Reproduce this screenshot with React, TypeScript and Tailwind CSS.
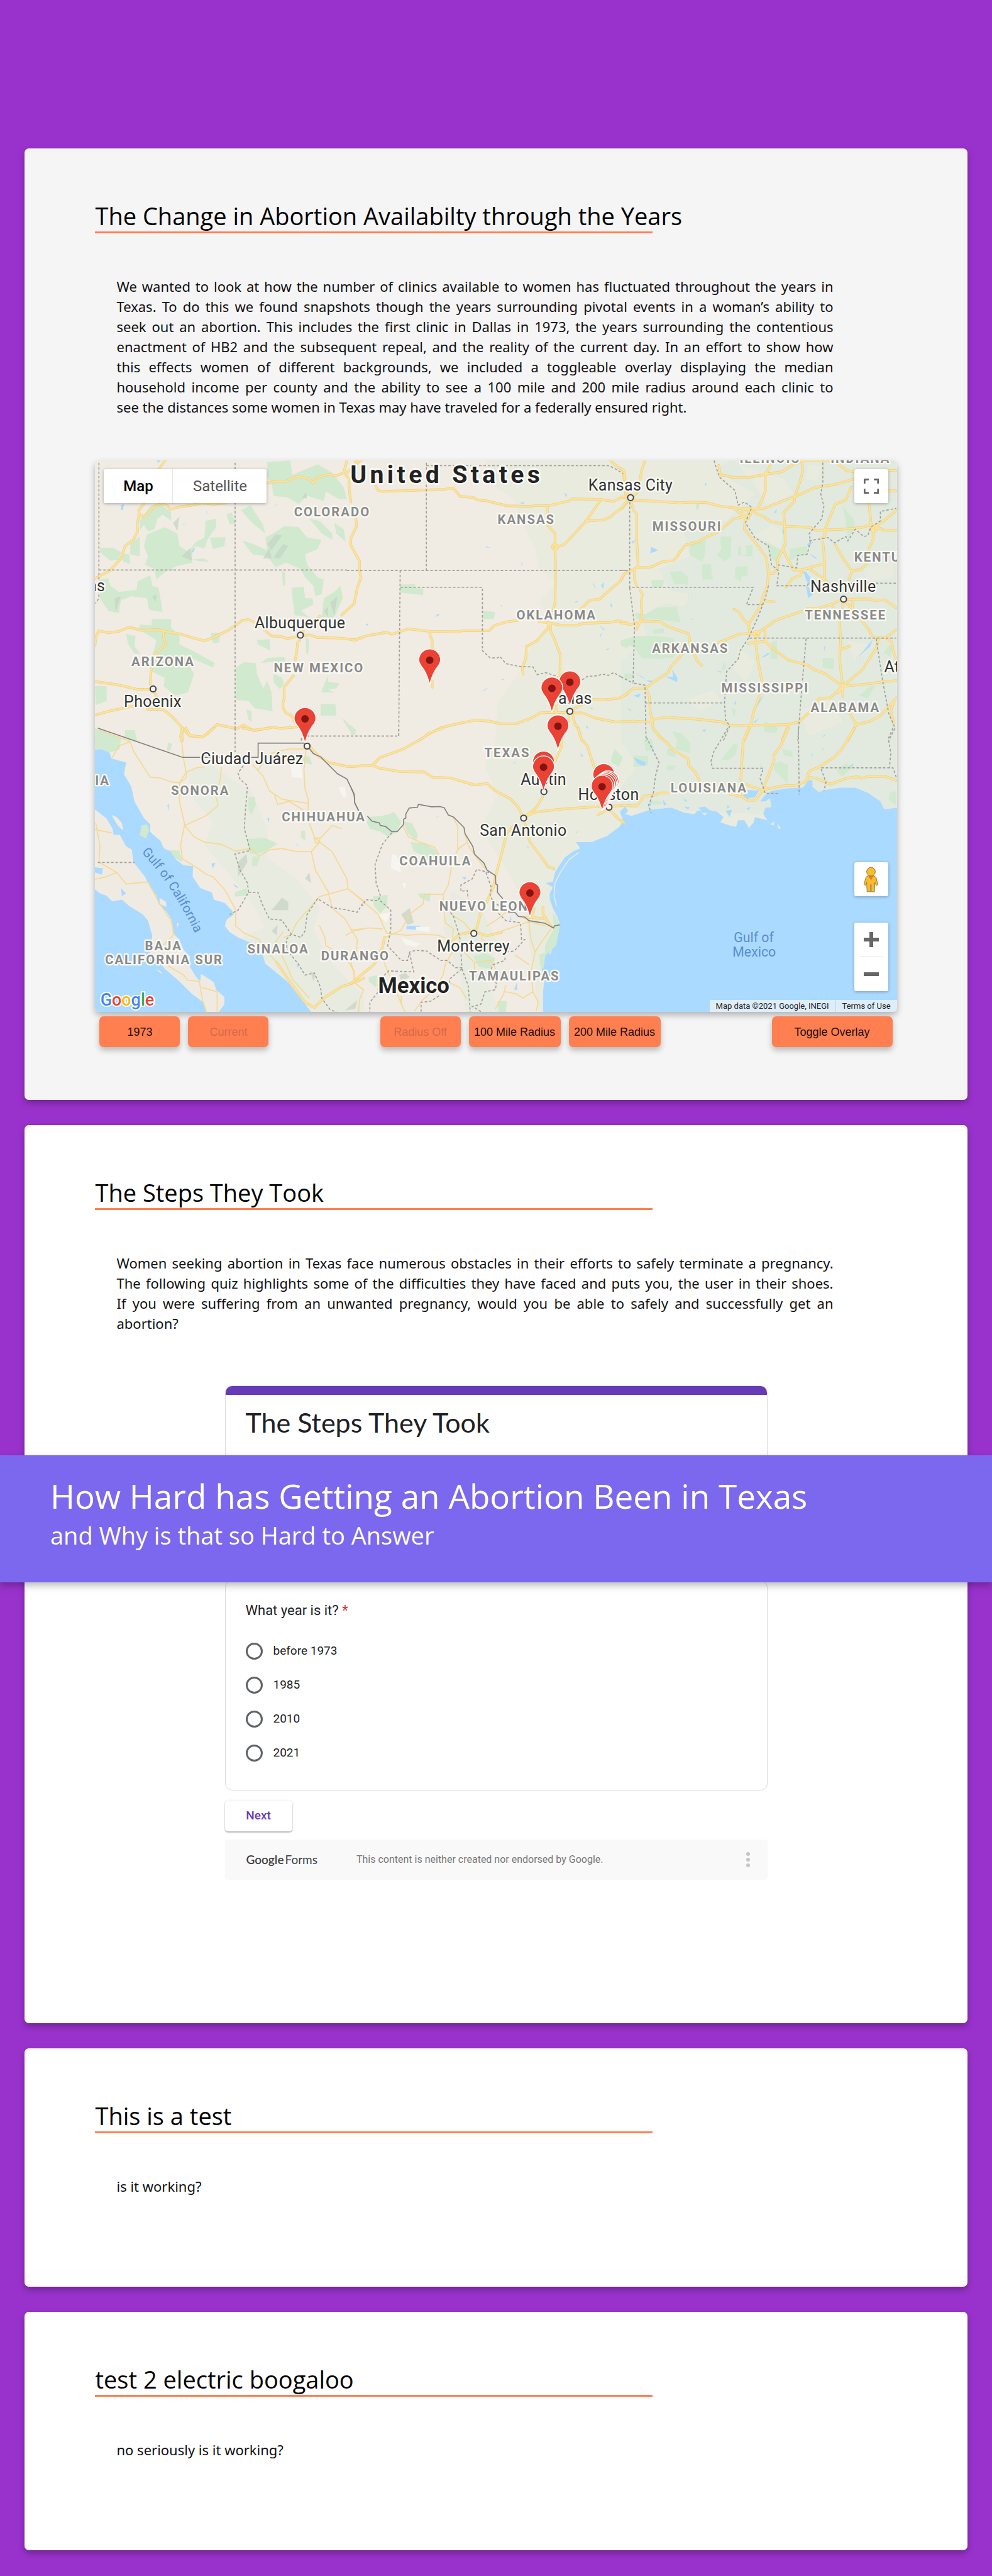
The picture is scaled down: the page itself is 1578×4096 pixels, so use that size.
import React from "react";

type Tile = {
  x: number;
  y: number;
  green: string;
  water: string;
  road: string;
  thin?: string;
  dashed: string;
  solid?: string;
};

/* The map sheet is stored in six tiles; every path is local to its tile. */
const TILES: Record<string, Tile> = {
  A: {
    x: 420,
    y: 2160,
    green:
      "M60 460L120 458L160 480L150 515L110 520L60 480ZM160 485L200 490L205 535L170 525ZM300 260L340 250L370 265L400 290L400 330L360 300L335 320L320 370L290 380L270 350L250 375L250 330ZM205 440L250 405L250 500L205 490ZM285 395L370 360L430 390L440 450L500 490L500 530L430 545L370 575L330 610L320 560L275 540L290 500L270 450ZM565 330L615 320L615 360L580 410L570 430L560 460L510 450L500 500L480 480L520 430L560 410ZM585 410L660 408L655 450L600 465ZM500 515L560 510L580 525L530 522ZM60 610L100 605L110 640L150 670L235 660L240 620L300 590L310 640L340 650L360 765L295 755L285 700L210 690L160 710L150 770L100 760L60 700ZM310 800L400 800L400 840L440 880L440 920L520 960L610 1010L600 1030L530 1000L450 965L510 1060L480 1150L420 1165L365 1120L370 1080L310 1050L310 980L330 900L250 850L250 825L305 830ZM185 870L230 880L225 930L255 965L225 965L195 920ZM590 865L635 865L630 910L600 915ZM36 1120L92 1120L92 1190L40 1210ZM665 300L690 290L706 345L680 345ZM860 50L970 42L980 110L1100 60L1170 100L1225 170L1240 225L1200 225L1140 190L1130 235L1050 210L1010 250L960 220L890 210L880 150L860 120ZM735 280L780 255L840 350L850 390L800 350L770 320ZM740 425L790 440L860 470L850 410L890 390L940 355L1010 360L1050 410L1120 420L1100 465L1040 490L1050 540L1100 600L1130 610L1120 680L1090 690L1080 640L1040 600L1020 560L950 530L900 550L860 500L790 490ZM1060 320L1110 330L1170 390L1170 420L1120 390ZM1180 340L1225 370L1235 430L1190 390ZM975 650L1035 645L1040 700L1075 700L1080 730L1020 760L1060 790L990 780ZM1130 700L1180 670L1210 640L1220 700L1180 790L1120 790ZM930 570L945 575L945 640L935 640ZM810 900L870 895L875 950L815 920ZM1045 890L1060 900L1055 970L1045 960ZM710 1030L750 1005L805 1010L810 1060L840 1130L860 1095L880 1150L885 1240L800 1225L770 1190L710 1185ZM830 1010L860 985L940 980L960 1030L900 1000ZM890 1060L930 1080L940 1110L920 1135L890 1100ZM1115 1205L1185 1205L1190 1260L1115 1260ZM1120 1140L1150 1070L1150 1100L1205 1105L1190 1130L1150 1135L1180 1150L1120 1150ZM1215 1270L1280 1330L1270 1355L1245 1320ZM760 1230L785 1240L785 1290L770 1280Z",
    water:
      "M330 42L350 42L340 52ZM160 255L175 250L170 278L162 278ZM495 480L515 455L510 475L498 482ZM565 275L577 298L570 290ZM885 265L912 248L905 255ZM450 348L470 345L460 350ZM400 565L415 556L408 565Z",
    road: "M372 42L340 85M270 250L245 280L248 300L237 345L240 380L220 420L180 450L160 510L105 570L36 605M245 300L275 310L320 260L350 248L380 255L395 275L430 265L500 255L550 245L600 250L665 245M858 150L910 140L945 142L1005 118L1060 130L1080 150L1095 125L1150 108L1190 115L1225 100L1240 42M1240 100L1300 45M1235 110L1250 130L1252 190L1260 240M1282 310L1287 355L1260 410L1258 445L1300 520L1300 570L1308 600L1290 650L1275 725L1215 780M36 925L42 880L55 855L100 865L150 858L200 838L260 853L340 850L370 858L440 870L500 888L560 903L600 888L670 855L700 835L740 805L770 802L810 820M840 845L880 880L925 882L955 893L1010 882L1065 875L1100 888L1200 890L1280 898L1320 885M362 858L365 890L375 920L320 970M305 1035L300 1110M310 1135L240 1135L140 1112L36 1098M315 1135L330 1170M36 1258L100 1240L220 1215M285 1230L360 1230L405 1265L450 1315L490 1358L550 1363L575 1345L620 1303L715 1323L745 1305L795 1332L890 1315L920 1322L1000 1315M452 1320L453 1380M1015 900L1005 910L1000 960L990 1010M985 1070L940 1125L940 1180L935 1200L935 1225L950 1250L975 1258L990 1290M1030 870L1032 850M1095 800L1110 785",
    dashed: "M55 52V700L38 725M55 565H1240M706 52V1320",
  },
  B: {
    x: 1680,
    y: 2160,
    green:
      "M235 635L305 632L307 650L345 655L345 685L300 680L235 672ZM630 760L688 765L682 800L632 798ZM1285 910L1320 920V940L1290 925ZM0 1305L22 1330L20 1350L0 1355Z",
    water:
      "M1020 195L1032 205L1028 220ZM805 245L825 240L826 250ZM1155 620L1172 655L1160 640ZM1195 640L1210 622L1205 655ZM1068 718L1090 710L1075 722ZM1235 720L1250 735L1245 745ZM1188 830L1215 850L1205 850ZM1188 880L1200 860L1192 885L1205 900ZM1215 945L1238 938L1225 948ZM405 790L412 775L425 778ZM625 1145L662 1122L640 1140ZM718 1088L736 1083L725 1092ZM68 828L80 820L80 830ZM640 450L665 458L650 458ZM812 525L822 548L815 540ZM1123 1302L1138 1325L1125 1318ZM1138 1220L1160 1228L1150 1230ZM714 728L724 740L718 740Z",
    road: "M110 150L130 185L150 190L340 183L450 180L465 174L490 175L522 213L585 218L605 230L645 234L745 258L860 261L885 256L940 258L1000 245L1040 235L1055 225L1190 227L1255 237L1285 222L1320 215M20 50L48 42M938 258V295M938 350L975 390V460M975 460L1022 440L1120 335L1190 235M1120 332L1210 325L1245 308L1260 293L1300 265L1320 240M1240 42L1260 60L1300 90L1315 215M962 455a12 12 0 1 0 24 0a12 12 0 1 0-24 0M975 470L978 560L975 720L965 760M1100 750L1140 710L1190 703L1220 675L1290 615L1305 585L1320 575M60 885L70 880L170 862L195 872L275 846L380 858L520 860L530 855H660L685 830L745 812L800 805M0 898L20 900L70 880M900 812L950 818L1000 828L1085 828L1110 820L1240 815L1275 808L1320 818M378 858L378 880L388 900V940M388 1095V1125M945 820L940 845L885 905L838 932L835 990L818 1030L823 1062M952 820L955 860L970 890L1000 970L998 1070M325 1380L360 1355L430 1318L520 1297L590 1283L665 1287L715 1300L785 1300L855 1275L905 1247L960 1245L1110 1248L1170 1273L1260 1290L1320 1290M1040 1245L1042 1285M1060 1230L1120 1200M1150 1183L1205 1185L1280 1178L1320 1158M1060 1260L1070 1300L1085 1320L1100 1370L1105 1380M980 1200L980 1250",
    dashed:
      "M360 52V565M360 66H1228L1240 70L1275 88L1300 105M-20 567H1310M235 567L232 860L228 1358H-220M235 648H628V950L665 985L700 985L712 978L740 1012L800 1025L870 1028L890 1065L930 1055L990 1075M1105 1090L1130 1073L1180 1070L1200 1062L1230 1068L1255 1055L1290 1075",
  },
  C: {
    x: 2970,
    y: 2160,
    green:
      "M330 445L405 420L400 490L390 525L330 495ZM475 405L528 405L525 500L495 525L460 495L480 465ZM560 455L575 455L575 495L600 490L595 450L628 445L628 500L560 495ZM235 575L290 570L320 600L320 635L255 630ZM385 535L430 535L435 585L440 610L390 610ZM545 550L605 545L605 590L575 600L575 625L545 600ZM145 615L205 612L200 645L150 645ZM65 770L120 775L170 745L265 740L285 815L210 805L130 795L75 800ZM150 850L205 845L205 865L155 870ZM0 900L75 880L160 880L250 890L270 950L250 985L180 990L100 985L60 930L0 925ZM15 1060L60 1060L60 1085L20 1085ZM805 465L890 450L890 490L840 500L810 520ZM690 430L765 470L750 540L715 500L705 470ZM715 915L745 900L748 990L715 990ZM965 985L1018 985L1015 1040L965 1030ZM1060 260L1110 320L1120 360L1085 420L1075 330ZM685 1290L745 1310L740 1345L685 1335ZM1140 1165L1190 1120L1215 1115L1180 1180ZM1255 960L1295 910L1290 980ZM490 1010L500 1010L500 1040L480 1040ZM530 1225L550 1230L540 1270ZM360 250L375 245L372 275L358 275Z",
    water:
      "M145 455L178 470L160 478L140 485ZM400 150L410 150L405 165ZM50 430L70 420L58 440ZM732 290L745 272L742 295ZM885 640L900 650L915 685L895 700L888 660ZM870 570L885 575L905 600L900 640L885 610ZM1118 995L1160 950L1205 895L1190 930L1140 975ZM970 960L972 930L978 925ZM670 985L700 962L712 965L690 978ZM215 1075L250 1075L245 1040L270 1080L268 1100ZM65 1055L120 1085L100 1078ZM120 1090L155 1095L140 1102ZM60 1165L95 1155L85 1175ZM30 1220L52 1240L40 1235ZM390 1332L408 1325L400 1338ZM900 485L940 510L925 508ZM890 440L920 430L895 455ZM600 300L615 300L605 330ZM650 1200L685 1160L640 1235ZM540 1205L552 1185L548 1210ZM330 800L348 797L335 803ZM456 1045L490 1052L475 1055ZM635 1290L660 1272L640 1298ZM965 1358L980 1350L970 1362ZM772 370L780 375L778 395L772 390Z",
    road: "M0 80L15 90L20 130L25 190L45 220M0 215L45 215L0 270M115 42L100 85L90 140L75 200L55 215M60 232L170 236L280 244L345 240L410 243L475 260L540 268L595 275L680 272L760 240L830 215L930 170L1030 155L1113 130M45 225L60 280L75 295L75 410L82 540L75 555L145 550L200 525L250 520L270 500L280 480L310 445L370 430L400 410L460 385L540 320L590 310L620 300M0 610L15 585L65 560L80 550M65 560L65 610L75 640M92 660L102 680L97 720L100 770L95 805L75 848M0 818L45 825L110 808L190 812L215 830L265 850L325 870L330 920L350 965L365 1000L385 1020M290 970L240 1025L225 1055L150 1105L118 1130L60 1130L0 1175M118 1130L135 1165L140 1240L150 1290L155 1325L200 1375L205 1380M0 1290L60 1287L145 1292L160 1277L215 1268L370 1278L480 1290L520 1307L615 1307L730 1305L800 1303L850 1290L900 1245L945 1180L1000 1175L1060 1120M468 65L475 110L540 123L615 122L690 108L770 95L800 75L865 42M695 108L715 60M690 100L690 190L655 270M865 42L868 100L850 160L830 215L830 235L778 290L783 355L785 440L775 465L750 510L748 560L730 580L705 583M545 275L595 310L590 370L640 430L695 505L705 580L700 640L680 690L665 740L610 825M595 270L680 310L720 335L783 345M583 270V310M610 270V320M783 355L905 362L930 375L1060 370L1150 362L1190 350L1225 360L1260 375L1316 375M1190 370L1215 350L1232 362L1212 380ZM775 465L790 500L825 565L860 565L970 535M790 645L820 605L860 590L865 560M895 555L985 620M962 410L975 405L975 370L1025 250L1075 230L1100 170M965 430L975 540L972 605M1025 445L1065 515L1105 570L1150 560L1175 535L1185 465L1205 420L1205 365L1195 340L1185 245M1205 360L1250 335L1316 280M1105 570L1090 610M865 42L1000 42M1040 60L1080 90L1110 95L1260 88L1316 90M1270 187L1316 187M540 752L565 765L585 800L610 825L615 860M465 912L570 870L650 868L740 805L865 762M890 748L940 748L1000 730L1060 705M1065 705L1190 703L1210 710L1260 707L1316 745M1000 730L1015 740M1060 720L1060 745M1075 720L1105 750L1110 705M1045 808L1050 900L1045 990L1060 1120L1060 1170M1150 805L1185 850L1200 880L1220 890L1270 885L1316 850M1270 890L1295 910L1300 950L1316 990M1230 895L1220 940L1155 1040L1060 1120L1170 1110L1260 1098L1316 1093M1050 945L1095 928M610 915L690 905L720 935L800 995L895 1020L920 1040L975 1060L1060 1120L1035 1150L1060 1130M688 855L690 905M640 880L655 1000L675 1100M665 1160L635 1240L620 1307L590 1380M800 1305L770 1380M1095 1250L1125 1303L1085 1380M1125 1303L1190 1288L1240 1260L1280 1220L1316 1175M1305 1190L1290 1240L1305 1300M690 712L732 716M636 870a12 12 0 1 0 24 0a12 12 0 1 0-24 0",
    dashed:
      "M42 240V648H632L600 730H680M42 650L65 830L58 1105L115 1115L120 1380M0 567H42M115 1200H490M445 42L470 120L545 185L560 255L590 240L625 265L595 340L640 410L705 450L720 540L755 570L745 640H892M892 640L895 628H1316M750 540L840 555L845 495L890 490L905 430L900 390L960 320L970 260L955 200L965 150V42M900 425L990 410L1020 435L1075 405L1085 425L1120 370L1160 405L1180 400L1195 360L1240 330L1240 285L1316 270M705 640L690 700L655 790L610 890H1316M610 890L570 950L560 990L505 1050L495 1200L500 1280L520 1310L490 1380M885 892L865 1120L845 1380M1220 892L1250 1090L1280 1250L1310 1320L1280 1380M0 1075L58 1105",
  },
  D: {
    x: 420,
    y: 3480,
    green:
      "M36 0L60 10L160 50L155 100L105 118L65 98L36 105ZM180 10L225 10L240 65L180 50ZM385 70L405 75L395 110L380 105ZM258 465L285 460L295 490L280 528L250 512ZM390 582L440 585L455 640L425 625ZM765 530L850 525L910 552L850 590L815 600L775 600ZM770 330L800 328L805 365L785 415L770 390ZM790 612L825 615L810 660L785 660ZM705 785L760 765L765 800L705 805ZM1025 135L1060 135L1075 175L1035 165ZM1022 490L1040 490L1042 535L1022 525ZM1250 0L1285 5L1270 35Z",
    water:
      "M382 370L390 362L388 395ZM860 430L870 432L866 452ZM593 648L612 643L600 670ZM695 742L725 762L710 762ZM160 765L185 790L165 803ZM36 665L75 670L70 700L36 690ZM1000 1130L1015 1128L1005 1145ZM998 550L1010 562L1002 560Z",
    road: "M450 60L445 40L455 0M470 0L490 35L550 43L605 0M745 0L795 10L870 0M1060 85L1100 130L1150 163L1250 185L1320 180M905 1120L960 1200L1040 1310L1085 1335L1130 1290L1215 1235L1280 1215L1320 1195",
    thin: "M120 140L150 85L205 65M60 10L205 65L220 110L300 235L345 238L395 255L440 262L470 240L475 210L520 190L560 185M450 60L460 150L472 210L440 262L440 350L465 460L445 560L455 625L520 665L570 700L600 710L655 770L710 870L708 945L750 980L820 1010L860 1070L905 1120M640 190L635 250L610 310L625 370L565 420L465 465L510 520L560 545L640 555L710 588L780 575L820 612L870 582L930 575L1000 590L1070 590L1110 545M790 175L840 230L870 300L930 340L1055 360M895 320L910 365L965 350L1030 390M1045 90L1035 200L1040 290L1055 340L1055 440L1085 520L1110 545L1070 590L1090 680L1150 780L1170 860L1230 910L1290 1010L1285 1100M815 200L880 120L960 100L1040 100M1085 525H1110V548H1090ZM1110 545L1170 590L1240 720L1245 768L1110 805L1000 930L975 985L940 1000M1245 768L1320 825M1110 530L1170 465L1215 480M1110 945L1135 1000L1140 1040L1230 1090L1275 1160V1220M1320 960L1270 970L1235 990M36 485L115 500M40 455L60 560L55 640L140 690L185 745L290 735L340 830L400 920L415 985L365 1035M36 722L85 712L140 690M385 1135L460 1180L480 1205L535 1210L550 1300L570 1357M550 1240L620 1260L620 1357M900 1020L950 1130L980 1200L1060 1290M900 1020L935 975",
    dashed:
      "M745 180L720 215L730 245L765 275L755 400L750 480L778 585L705 602L730 680L765 740L770 785L720 870L680 890M770 785L815 785L835 840L870 912L930 918L975 985L1020 1000L1040 970L1050 890L1100 815L1170 858L1235 868L1290 880L1320 830M975 985L950 1010L955 1060L1010 1130L1040 1180L1085 1170L1115 1240L1120 1290L1160 1345L1190 1357M50 642H225M1022 60L1025 38M706 0V115",
    solid:
      "M50 0L455 140H816V72H1040L1080 122L1115 138L1195 218L1240 243L1275 315L1278 358L1300 402",
  },
  E: {
    x: 1680,
    y: 3480,
    green:
      "M85 425L145 420L185 410L205 400L240 450L220 490L180 520L140 495L90 480L75 450ZM250 445L290 455L320 510L310 540L270 500ZM285 545L350 550L400 580L430 620L420 640L370 620L300 590ZM105 805L175 797L172 850L140 885L110 850ZM320 790L380 790L375 830L330 810ZM585 1090L640 1075L690 1100L670 1150L610 1140ZM965 880L1000 940L980 1040L925 1090L930 1030L970 960ZM700 1305L745 1305L740 1357H705ZM85 1190L125 1180L120 1240L85 1210ZM1245 140L1260 100L1300 140L1280 185L1245 165ZM900 1080L930 1075L920 1150L905 1140Z",
    water:
      "M265 945L330 945L335 965L265 960ZM400 430L425 418L415 425ZM530 712L550 712L545 725ZM780 1250L792 1215L795 1250ZM760 920L763 895L767 915ZM1072 505L1085 488L1080 500ZM838 565L852 568L845 572ZM765 170L798 158L780 168ZM1095 120L1110 130L1105 140Z",
    road: "M0 183L100 178L140 140L190 122L250 100L340 50L370 25L440 0M100 178L130 190L240 208L350 210L390 235L475 238L590 272L650 265L690 300L765 340L800 380L825 430L885 380L915 330M975 160L1005 90L1008 50M840 420L880 402L930 395L1000 388L1130 378L1320 370M790 455L745 500L720 600L690 710L680 760L640 850M830 450L855 545L920 630L940 660L970 672M620 880L600 960L570 975L520 985L480 1020M600 975L650 993L720 975M1085 0L1100 50L1130 85L1150 150L1165 195M1180 415L1215 395L1230 385L1280 435L1305 450M830 905L870 905L930 912L960 950M917 855L918 890L935 915M875 860L868 905M0 1220L60 1170L110 1130L150 1050L160 1000",
    thin: "M0 780L60 830L130 890L170 980L270 990L340 985L420 990L480 1015M250 470L275 520L330 545L400 570L430 620M490 430L510 470V580L480 660L465 750L440 795L350 795L345 840L280 890L240 965L200 985L165 1000M510 580L555 545M540 490L560 560L600 620L640 670M440 795L450 930L490 960L485 1000M480 890L540 930L570 965M625 985L625 1010L660 1030L680 1030M650 945L690 920L740 880M720 970L850 925L930 945M850 925L860 1010L880 1070L860 1160L870 1260L895 1310L885 1350M955 960L905 1030L880 1070M785 1085L850 1130M590 1120L670 1110L690 1150M530 1060L590 1120V1160M740 1230L730 1270L690 1340M740 1260L790 1270L820 1290L870 1260M490 1060L450 1130L440 1180L400 1250L340 1300L305 1350M470 1215L520 1240L550 1290M240 1280V1320L260 1357M0 965L90 955L150 960M150 1100L200 1220L250 1340M0 1120L15 1180L20 1220L60 1250L40 1300L36 1357",
    dashed:
      "M228 38V0M195 500L150 555L115 650L120 740L140 800L130 825L70 820L55 850M140 825L190 870L190 960L175 1040L240 1110L270 1110L280 1070L310 1062L360 1065L430 1110L460 1110L500 1145L530 1145L520 1000L490 900L475 880M280 1075L300 1165L180 1160L130 1210V1260L90 1310V1357M530 1150L470 1200V1225M530 1150L560 1230L570 1357M660 690L600 675L580 720L525 750V780L555 775L560 815M645 690L670 760L665 800L680 830L710 850M705 885L740 920L810 930L815 1010L830 1010L780 1065L740 1070L735 1110L680 1130L660 1170L695 1220L690 1250L640 1260L620 1320L580 1330L625 1357M420 1280L380 1305L335 1310L335 1357",
    solid:
      "M0 285L15 320L18 358L40 402M78 420L100 445L135 453L140 465L165 470L195 495H220L250 462L252 435L262 430V410L278 382L318 378L322 364L385 376L425 375L445 380L465 415L490 425L540 475L545 505L582 565L590 602L635 645L650 678L690 705L692 745L700 750V785L725 815M750 878L785 882L800 900L830 903L850 920L925 932L968 955L972 945L1000 940",
  },
  F: {
    x: 2970,
    y: 3480,
    green:
      "M245 15L290 25L330 70L330 120L260 100L270 60ZM110 60L145 50L160 105L120 110ZM60 130L130 135L130 180L60 185ZM220 180L265 178L250 200L222 200ZM220 100L250 100L265 140L222 130ZM540 75L560 80L545 130L510 155L480 150ZM690 0L750 0L740 25L690 20ZM730 170L760 160L800 175L795 265L760 225L735 205ZM770 100L820 110L820 140L780 130ZM1035 195L1075 170L1110 185L1060 230L1035 215ZM1285 310L1316 300V370L1280 340ZM150 345L195 350L195 365L150 365Z",
    water:
      "M60 140L85 150L120 165L110 182L80 170ZM145 70L155 110L150 115ZM665 160L678 200L672 190ZM130 375L148 345L145 370ZM200 340L218 365L205 370ZM305 375L328 378L320 390ZM370 380L400 375L430 395L390 400ZM300 335L318 350L305 350ZM500 395L530 390L520 425ZM600 385L620 375L610 392ZM505 370L520 375L510 385ZM1095 180L1112 168L1105 185ZM910 130L916 120L916 135ZM962 95L968 100L964 108ZM965 38L980 32L972 40ZM390 12L405 5L398 18ZM595 295L660 300L640 330L600 338L580 320Z",
    road: "M155 0L190 50L215 65L250 105L320 145L325 180L355 210L375 250M0 370L75 372L110 325L155 322L185 310L230 310M520 315L580 328L605 345H640L670 310L685 293L780 275H830L885 255L895 235L935 240L1000 268L1075 240L1130 232L1150 240L1180 232L1260 230L1316 250M600 270L680 297M610 0L585 60L575 200L573 250M580 290L583 320M800 0L765 80L730 130L732 155L680 290M1115 0L1060 95L1020 140L940 190L900 205L890 235M0 440L15 452",
    dashed:
      "M122 45L150 100L182 165L165 230L155 310L132 370L145 405M510 0L470 70L445 110L430 160L438 192H680L665 240L690 312H760M848 0L852 318M1316 235L1300 190H955L980 260L970 300M1300 0L1278 50L1290 120L1283 190",
  },
};

const EASTERN_PLAINS =
  "M650 42L640 130L780 230L810 330L880 460L900 560L980 620L900 720L960 800L850 950L800 1060L700 1200L690 1380L640 1500L700 1640L640 1760L600 1800L650 1850L720 1960L780 2060L830 2180L860 2400L900 2700L2620 2700V42Z";
const EASTERN_WOODS =
  "M520 42L450 90L640 200L500 330L300 380L330 500L180 560L250 700L100 800L130 900L0 1000V1380L80 1500L0 1600V1700L1316 1760V42Z";
const WARM_PATCHES =
  "M560 60L780 130L820 200L700 260L640 160ZM720 350L780 380L760 460L640 400ZM130 100L240 60L330 160L200 200ZM850 1240L1000 1180L1060 1290L900 1360ZM560 930L640 1000L600 1100L540 1040ZM1160 560L1300 520V600L1180 620ZM900 60L960 70L940 140L880 130ZM220 660L330 680L300 740L220 720ZM1080 900L1180 920L1120 1010ZM320 1180L440 1140L480 1190L380 1240Z";
const SIERRA =
  "M480 200L600 180L700 250L780 300L860 480L860 620L1000 720L1110 860L1080 960L1150 1100L1240 1200L1320 1280V1400H1070L900 1160L740 1000L850 950L780 820L680 700L560 560L600 450L500 330ZM1740 780L1880 860L1960 1020L1900 1200L2000 1400H1820L1780 1180L1700 960Z";
const GULF_OF_MEXICO =
  "M918 1400L918 1260L925 1190L910 1150L925 1100L930 1040L960 1000L990 960L1000 940L985 900L965 860L950 820L950 790L965 760L930 740L965 735L975 690L1000 650L1020 620L1060 590L1095 575L1075 545L1150 545L1225 515L1285 470L1300 440L1285 400L1310 375L1325 395L1310 410L1340 420L1430 390L1530 380L1590 403L1640 412L1655 395L1700 390L1750 400L1780 425L1765 450L1810 465L1840 472L1850 440L1880 440L1902 478L1925 450L1930 425L1990 440L1970 410L1980 380L2010 378L2002 335L1980 350L1955 350L1980 320L2010 300L2090 288L2160 285L2185 250L2205 248L2205 280L2235 305L2275 295L2340 285L2410 285L2470 310L2530 350L2548 388L2620 380V1400Z";
const PACIFIC =
  "M30 105L65 100L105 115L115 145L185 165L175 220L210 280L225 350L270 430L300 460L300 495L350 540L365 575L400 590L425 630L460 655L505 660L503 710L540 765L595 785L605 820L655 835L690 870L700 890L665 915L657 945L680 975L720 1000L790 1030L840 1090L850 1125L905 1170L960 1215L1010 1280L1070 1357V1400H30Z";
const BAJA =
  "M30 385L90 430L120 480L125 510L155 510L185 565L212 580L220 640L275 710L300 760L330 800L340 840L380 880L405 920L408 980L440 1010L460 1060L490 1090L490 1140L520 1190L540 1210L542 1175L560 1185L605 1215L615 1250L655 1285L655 1320L625 1360L568 1360L555 1310L500 1270L440 1210L370 1150L330 1100L300 1080L310 990L290 920L265 890L200 850L165 820L120 828L90 800L60 790L30 765ZM115 415L140 425L165 455L172 490L145 465ZM345 810L375 830L378 855L345 840ZM428 930L438 935L430 952ZM325 1150L355 1165L355 1175Z";
const DELTA_ISLANDS =
  "M385 405L415 405L400 418ZM712 460L735 445L730 465ZM745 455L765 478L755 485Z";
const RELIEF =
  "M840 510L870 460L880 510ZM890 505L935 440L960 450L920 510ZM860 440L900 395L930 400L880 470ZM1160 720L1195 690L1180 780ZM1130 760L1150 740L1150 790ZM130 700L160 690L135 765ZM310 690L330 680L325 718ZM1025 220L1045 195L1050 222ZM1500 2210L1540 2180L1560 2250L1530 2260ZM1040 2040L1060 2010L1070 2060ZM880 2190L930 2130L960 2150L960 2190ZM880 2290L910 2260L905 2310ZM1490 2500L1520 2490L1540 2510L1500 2530ZM720 1960L760 1920L765 1960L720 2030ZM1230 2670L1290 2620L1280 2660ZM1065 2480L1090 2500L1080 2530ZM410 340L440 310L430 380ZM450 500L490 460L500 520Z";

type Kind = "state" | "city" | "water";
type Anchor = "middle" | "start" | "end";
const LABELS: [string, string, number, number, Kind, Anchor?][] = [
  ["COLORADO", "A", 1170, 307, "state"],
  ["ARIZONA", "A", 362, 1025, "state"],
  ["NEW MEXICO", "A", 1107, 1055, "state"],
  ["KANSAS", "B", 838, 343, "state"],
  ["OKLAHOMA", "B", 982, 800, "state"],
  ["MISSOURI", "C", 317, 377, "state"],
  ["ILLINOIS", "C", 712, 53, "state"],
  ["INDIANA", "C", 1145, 53, "state"],
  ["KENTUCKY", "C", 1115, 525, "state", "start"],
  ["TENNESSEE", "C", 1074, 800, "state"],
  ["ARKANSAS", "C", 332, 960, "state"],
  ["MISSISSIPPI", "C", 690, 1150, "state"],
  ["ALABAMA", "C", 1073, 1242, "state"],
  ["BAJA CALIFORNIA", "D", 108, 270, "state", "end"],
  ["SONORA", "D", 540, 320, "state"],
  ["CHIHUAHUA", "D", 1130, 445, "state"],
  ["BAJA", "D", 364, 1062, "state"],
  ["CALIFORNIA SUR", "D", 367, 1127, "state"],
  ["SINALOA", "D", 912, 1078, "state"],
  ["DURANGO", "D", 1281, 1110, "state"],
  ["TEXAS", "E", 747, 138, "state"],
  ["COAHUILA", "E", 404, 656, "state"],
  ["NUEVO LEON", "E", 635, 872, "state"],
  ["TAMAULIPAS", "E", 781, 1207, "state"],
  ["LOUISIANA", "F", 421, 307, "state"],
  ["Las Vegas", "A", 85, 665, "city", "end"],
  ["Albuquerque", "A", 1016, 843, "city"],
  ["Phoenix", "A", 312, 1220, "city"],
  ["Dallas", "B", 1046, 1205, "city"],
  ["Kansas City", "B", 1336, 185, "city"],
  ["Nashville", "C", 1062, 670, "city"],
  ["Atlanta", "C", 1258, 1053, "city", "start"],
  ["Ciudad Juárez", "D", 787, 172, "city"],
  ["Austin", "E", 920, 270, "city"],
  ["Houston", "E", 1231, 345, "city"],
  ["San Antonio", "E", 823, 515, "city"],
  ["Monterrey", "E", 585, 1067, "city"],
  ["Gulf of", "F", 635, 1023, "water"],
  ["Mexico", "F", 637, 1091, "water"],
];

const CITY_DOTS: [string, number, number][] = [
  ["A", 1018, 876],
  ["A", 314, 1133],
  ["B", 1046, 1240],
  ["C", 46, 219],
  ["C", 1064, 704],
  ["D", 1050, 86],
  ["E", 922, 304],
  ["E", 1233, 378],
  ["E", 825, 430],
  ["E", 587, 981],
];

const CLINICS: [string, number, number][] = [
  ["D", 1040, 70],
  ["B", 376, 1110],
  ["B", 1046, 1215],
  ["B", 960, 1244],
  ["E", 989, 105],
  ["E", 920, 278],
  ["E", 920, 301],
  ["E", 1208, 338],
  ["E", 1228, 372],
  ["E", 1222, 377],
  ["E", 1216, 382],
  ["E", 1208, 388],
  ["E", 1200, 394],
  ["E", 855, 902],
];

const at = (t: string) => `translate(${TILES[t].x} ${TILES[t].y})`;

const LABEL_CLASS: Record<Kind, string> = {
  state: "fill-[#8a8a8a] stroke-[#fafaf5] text-[61px] font-bold tracking-[6px]",
  city: "fill-[#333333] stroke-[#fafaf5] text-[75px] tracking-[1px]",
  water: "fill-[#5a8dd2] stroke-[#aadaff] text-[64px]",
};

function MapDrawing() {
  const names = Object.keys(TILES);
  return (
    <svg
      className="block h-full w-full font-['Roboto',sans-serif]"
      viewBox="456 2200 3831 2637"
      preserveAspectRatio="xMidYMid slice"
      role="img"
      aria-label="Map of clinics in Texas"
    >
      <rect x="0" y="2000" width="5000" height="3200" fill="#f0ebe3" />
      <path d={EASTERN_PLAINS} transform={at("B")} fill="#e9ebdf" />
      <path d={EASTERN_WOODS} transform={at("C")} fill="#e2e9de" />
      <path d={WARM_PATCHES} transform={at("C")} fill="#e9ebde" />
      <path d={SIERRA} transform={at("D")} fill="#e8ebdf" />
      <path d={GULF_OF_MEXICO} transform={at("E")} fill="#aadaff" />
      <path d={PACIFIC} transform={at("D")} fill="#aadaff" />
      <path d={BAJA} transform={at("D")} fill="#efebe3" />
      <path d={DELTA_ISLANDS} transform={at("F")} fill="#e4ebdc" />
      <path
        d="M1088 595L1040 630L1000 690L975 740L970 800L982 852M950 1080L985 980"
        transform={at("E")}
        fill="none"
        stroke="#e8ebdf"
        strokeWidth="5"
      />
      {names.map((t) => (
        <g key={t} transform={at(t)}>
          <path d={TILES[t].green} fill="#d1e9cf" />
          <path d={TILES[t].water} fill="#aadaff" />
        </g>
      ))}
      <path d={RELIEF} transform={at("A")} fill="#c5d3c4" fillOpacity="0.7" />
      <path
        d="M195 600L220 610L240 690L190 670ZM245 740L265 740L255 770ZM240 1000L330 1030L310 1045L260 1035ZM310 950L380 950L370 975L310 965ZM130 890L190 880L170 930ZM-290 180L-240 170L-230 240L-280 235ZM-60 280L-30 280L-20 330L-40 330Z"
        transform={at("E")}
        fill="#f6f5f0"
      />
      {names.map((t) => (
        <g key={t} transform={at(t)} fill="none" strokeLinejoin="round" strokeLinecap="round">
          <path d={TILES[t].thin} stroke="#f6d98f" strokeWidth="5" />
          <path d={TILES[t].road} stroke="#ebcd87" strokeWidth="12" />
          <path d={TILES[t].road} stroke="#fde396" strokeWidth="8" />
        </g>
      ))}
      {names.map((t) => (
        <g key={t} transform={at(t)} fill="none">
          <path d={TILES[t].dashed} stroke="#a0a09c" strokeWidth="5" strokeDasharray="12 9" />
          <path d={TILES[t].solid} stroke="#828282" strokeWidth="5" />
        </g>
      ))}
      {CITY_DOTS.map(([t, x, y]) => (
        <circle
          key={`${t}${x}`}
          transform={at(t)}
          cx={x}
          cy={y}
          r="14"
          fill="#f5f5f2"
          stroke="#444444"
          strokeWidth="6"
        />
      ))}
      {LABELS.map(([text, t, x, y, kind, anchor]) => (
        <text
          key={`${text}${t}`}
          transform={at(t)}
          x={x}
          y={y}
          textAnchor={anchor ?? "middle"}
          paintOrder="stroke"
          strokeWidth={kind === "water" ? 0 : 14}
          strokeLinejoin="round"
          className={LABEL_CLASS[kind]}
        >
          {text}
        </text>
      ))}
      <g paintOrder="stroke" strokeWidth="16" strokeLinejoin="round" textAnchor="middle">
        <text
          transform={at("B")}
          x="458"
          y="150"
          className="fill-[#222222] stroke-[#fafaf5] text-[118px] font-bold tracking-[16px]"
        >
          United States
        </text>
        <text
          transform={at("E")}
          x="300"
          y="1266"
          className="fill-[#222222] stroke-[#fafaf5] text-[104px] font-bold"
        >
          Mexico
        </text>
      </g>
      <path id="gulf-line" d="M678 4075Q810 4205 935 4460" fill="none" />
      <text className="fill-[#5a8dd2] text-[62px]">
        <textPath href="#gulf-line">Gulf of California</textPath>
      </text>
      {CLINICS.map(([t, x, y], i) => (
        <g key={i} transform={`translate(${TILES[t].x + x} ${TILES[t].y + y})`}>
          <path
            d="M0 2C-6 -22 -12 -46 -30 -72C-42 -90 -52 -98 -52 -116A52 52 0 0 1 52 -116C52 -98 42 -90 30 -72C12 -46 6 -22 0 2Z"
            fill="#ea4335"
            stroke="#ffffff"
            strokeWidth="4"
          />
          <circle cy="-114" r="18" fill="#811411" />
        </g>
      ))}
      <text
        transform={at("D")}
        x="62"
        y="1326"
        paintOrder="stroke"
        stroke="#ffffff"
        strokeWidth="12"
        strokeLinejoin="round"
        className="text-[81px] font-medium"
      >
        <tspan fill="#4285f4">G</tspan>
        <tspan fill="#ea4335">o</tspan>
        <tspan fill="#fbbc05">o</tspan>
        <tspan fill="#4285f4">g</tspan>
        <tspan fill="#34a853">l</tspan>
        <tspan fill="#ea4335">e</tspan>
      </text>
    </svg>
  );
}

function ClinicMap() {
  const control = "absolute bg-white shadow-[0_1px_5px_rgba(0,0,0,0.3)]";
  return (
    <div className="relative h-[877px] overflow-hidden rounded-[7px] font-['Roboto',sans-serif]">
      <MapDrawing />
      <div className={`${control} left-[14px] top-[14px] flex h-[54px] rounded-[3px] text-2xl`}>
        <button type="button" className="w-[110px] border-r border-[#e6e6e6] font-medium text-black">
          Map
        </button>
        <button type="button" className="w-[149px] text-[#565656]">
          Satellite
        </button>
      </div>
      <button
        type="button"
        aria-label="Toggle fullscreen view"
        className={`${control} right-[14px] top-[14px] flex size-[54px] items-center justify-center rounded-[3px]`}
      >
        <svg viewBox="0 0 18 18" className="size-6" fill="#666666">
          <path d="M0 0v6h2V2h4V0H0zM16 0h-4v2h4v4h2V0h-2zM16 16h-4v2h6v-6h-2v4zM2 12H0v6h6v-2H2v-4z" />
        </svg>
      </button>
      <button
        type="button"
        aria-label="Street View"
        className={`${control} right-[14px] top-[639px] flex size-[54px] items-center justify-center rounded-[3px]`}
      >
        <svg viewBox="0 0 70 122" className="h-[41px] w-[23px]" stroke="#8c7a52" strokeWidth="3">
          <path
            d="M18 44L52 44L60 52L68 86L60 90L54 74L52 120H36V86H33V120H16L14 74L8 90L1 84L11 50Z"
            fill="#fbbc29"
          />
          <path d="M22 42H48L35 64Z" fill="#e07b2c" stroke="none" />
          <circle cx="35" cy="23" r="21" fill="#fbbc29" />
        </svg>
      </button>
      <div className={`${control} right-[14px] top-[735px] flex w-[54px] flex-col items-center rounded-[3px]`}>
        <button type="button" aria-label="Zoom in" className="flex size-[54px] items-center justify-center">
          <svg viewBox="0 0 24 24" className="size-6" fill="#666666">
            <path d="M9 0h6v9h9v6h-9v9H9v-9H0V9h9z" />
          </svg>
        </button>
        <div className="h-px w-10 bg-[#e0e0e0]" />
        <button type="button" aria-label="Zoom out" className="flex size-[54px] items-center justify-center">
          <svg viewBox="0 0 24 24" className="size-6" fill="#666666">
            <path d="M0 9h24v6H0z" />
          </svg>
        </button>
      </div>
      <div className="absolute bottom-0 right-0 flex h-[19px] text-[13px] leading-[19px] text-[#222222]">
        <span className="bg-[#f5f5f5]/70 px-[10px]">Map data ©2021 Google, INEGI</span>
        <a href="#terms" className="ml-px bg-[#f5f5f5]/70 px-[10px]">
          Terms of Use
        </a>
      </div>
    </div>
  );
}

function MapButton({
  children,
  width,
  disabled,
}: {
  children: string;
  width: string;
  disabled?: boolean;
}) {
  return (
    <button
      type="button"
      disabled={disabled}
      className={`${width} h-[49px] whitespace-nowrap rounded-[7px] bg-[#ff7f50] text-center font-['Liberation_Sans',Arial,sans-serif] text-lg text-[#1c0d08] shadow-[0_5px_10px_rgba(0,0,0,0.25)] disabled:text-[#cf6c48]`}
    >
      {children}
    </button>
  );
}

function Card({
  title,
  text,
  className,
  children,
}: {
  title: string;
  text: string;
  className: string;
  children?: React.ReactNode;
}) {
  return (
    <section
      className={`${className} mx-[2.5%] rounded-[7px] px-[7.1cqw] pt-[83px] shadow-[0_5px_11px_rgba(0,0,0,0.28)]`}
    >
      <h2 className="w-[69.5%] whitespace-nowrap border-b-[3px] border-[#ff7f50] text-[38px] leading-[49px] text-black">
        {title}
      </h2>
      <p className="ml-[34px] mr-[101px] mt-[68px] text-justify font-['Noto_Sans','Open_Sans',sans-serif] text-[22px] leading-8 text-[#111111]">
        {text}
      </p>
      {children}
    </section>
  );
}

function QuizForm() {
  return (
    <form
      onSubmit={(event) => event.preventDefault()}
      className="mx-auto mt-[83px] w-[863px] max-w-full font-['Roboto',sans-serif]"
    >
      <div className="h-[294px] overflow-hidden rounded-[11px] border border-[#dadce0]">
        <div className="h-[14px] bg-[#673ab7]" />
        <h3 className="px-8 pt-4 font-['Lato',sans-serif] text-[43px] leading-[56px] text-[#202124]">
          The Steps They Took
        </h3>
      </div>
      <fieldset className="mt-4 rounded-[11px] border border-[#dadce0] px-8 pb-8 pt-[31px]">
        <legend className="float-left mb-[21px] text-[22px] leading-8 text-[#202124]">
          What year is it? <span className="text-[#d93025]">*</span>
        </legend>
        <div className="clear-both">
          {["before 1973", "1985", "2010", "2021"].map((year) => (
            <label key={year} className="flex h-[54px] items-center gap-[17px] text-[19px] text-[#202124]">
              <input
                type="radio"
                name="year"
                value={year}
                className="size-[27px] appearance-none rounded-full border-[3px] border-[#5f6368] checked:border-[8px]"
              />
              {year}
            </label>
          ))}
        </div>
      </fieldset>
      <button
        type="submit"
        className="mt-4 block h-[49px] w-[107px] rounded-[5px] bg-white text-[19px] font-medium text-[#673ab7] shadow-[0_2px_2px_rgba(0,0,0,0.25),0_0_3px_rgba(0,0,0,0.15)]"
      >
        Next
      </button>
      <div className="mt-[13px] flex h-16 items-center rounded-[5px] bg-[#f9f9f9] pl-[34px] pr-7 text-base text-[#777777]">
        <span className="flex gap-[2px] font-['Lato',sans-serif] text-[19px] text-[#3c4043]">
          <b className="font-semibold">Google</b>
          <span>Forms</span>
        </span>
        <span className="ml-[62px]">This content is neither created nor endorsed by Google.</span>
        <svg viewBox="0 0 6 24" className="ml-auto h-6 w-[6px]" fill="#c6c6c6">
          <circle cx="3" cy="3" r="3" />
          <circle cx="3" cy="12" r="3" />
          <circle cx="3" cy="21" r="3" />
        </svg>
      </div>
    </form>
  );
}

export default function App() {
  return (
    <div className="relative flex flex-col gap-10 bg-[#9932cc] pb-[42px] pt-[236px] font-['Open_Sans','Noto_Sans',sans-serif] [container-type:inline-size]">
      <Card
        title="The Change in Abortion Availabilty through the Years"
        text={
          "We wanted to look at how the number of clinics available to women has fluctuated throughout the years in Texas. To do this we found snapshots though the years surrounding pivotal events in a woman’s ability to seek\u00a0out an abortion. This includes the first clinic in Dallas in 1973, the years surrounding the contentious enactment of HB2 and the subsequent repeal, and the reality of the current day. In an effort to show how this\u00a0effects women of different backgrounds, we included a toggleable overlay displaying the median household\u00a0income per county and the ability to see a 100 mile and 200 mile radius around each clinic to see\u00a0the distances some women in Texas may have traveled for a federally ensured right."
        }
        className="bg-[#f5f5f5] pb-[84px]"
      >
        <div className="mt-[69px] rounded-[7px] shadow-[0_5px_11px_rgba(0,0,0,0.28)]">
          <ClinicMap />
        </div>
        <div className="mt-[7px] flex justify-between px-[7px]">
          <div className="flex gap-[13px]">
            <MapButton width="w-32">1973</MapButton>
            <MapButton width="w-32" disabled>
              Current
            </MapButton>
          </div>
          <div className="flex gap-[13px]">
            <MapButton width="w-32" disabled>
              Radius Off
            </MapButton>
            <MapButton width="w-[146px]">100 Mile Radius</MapButton>
            <MapButton width="w-[146px]">200 Mile Radius</MapButton>
          </div>
          <MapButton width="w-48">Toggle Overlay</MapButton>
        </div>
      </Card>
      <Card
        title="The Steps They Took"
        text={
          "Women seeking abortion in Texas face numerous obstacles in their efforts to safely terminate a pregnancy. The following quiz highlights some of the difficulties they have faced and puts you, the user in their shoes. If\u00a0you were suffering from an unwanted pregnancy, would you be able to safely and successfully get an abortion?"
        }
        className="bg-white pb-[228px]"
      >
        <QuizForm />
      </Card>
      <Card title="This is a test" text="is it working?" className="bg-white pb-[144px]" />
      <Card
        title="test 2 electric boogaloo"
        text="no seriously is it working?"
        className="bg-white pb-[144px]"
      />
      <header className="absolute inset-x-0 top-[2314px] bg-[#7b68ee] px-20 pb-[49px] pt-[29px] text-white shadow-[0_5px_11px_rgba(0,0,0,0.28)]">
        <h1 className="text-[53px] leading-[72px]">How Hard has Getting an Abortion Been in Texas</h1>
        <p className="text-[38px] leading-[52px]">and Why is that so Hard to Answer</p>
      </header>
    </div>
  );
}
